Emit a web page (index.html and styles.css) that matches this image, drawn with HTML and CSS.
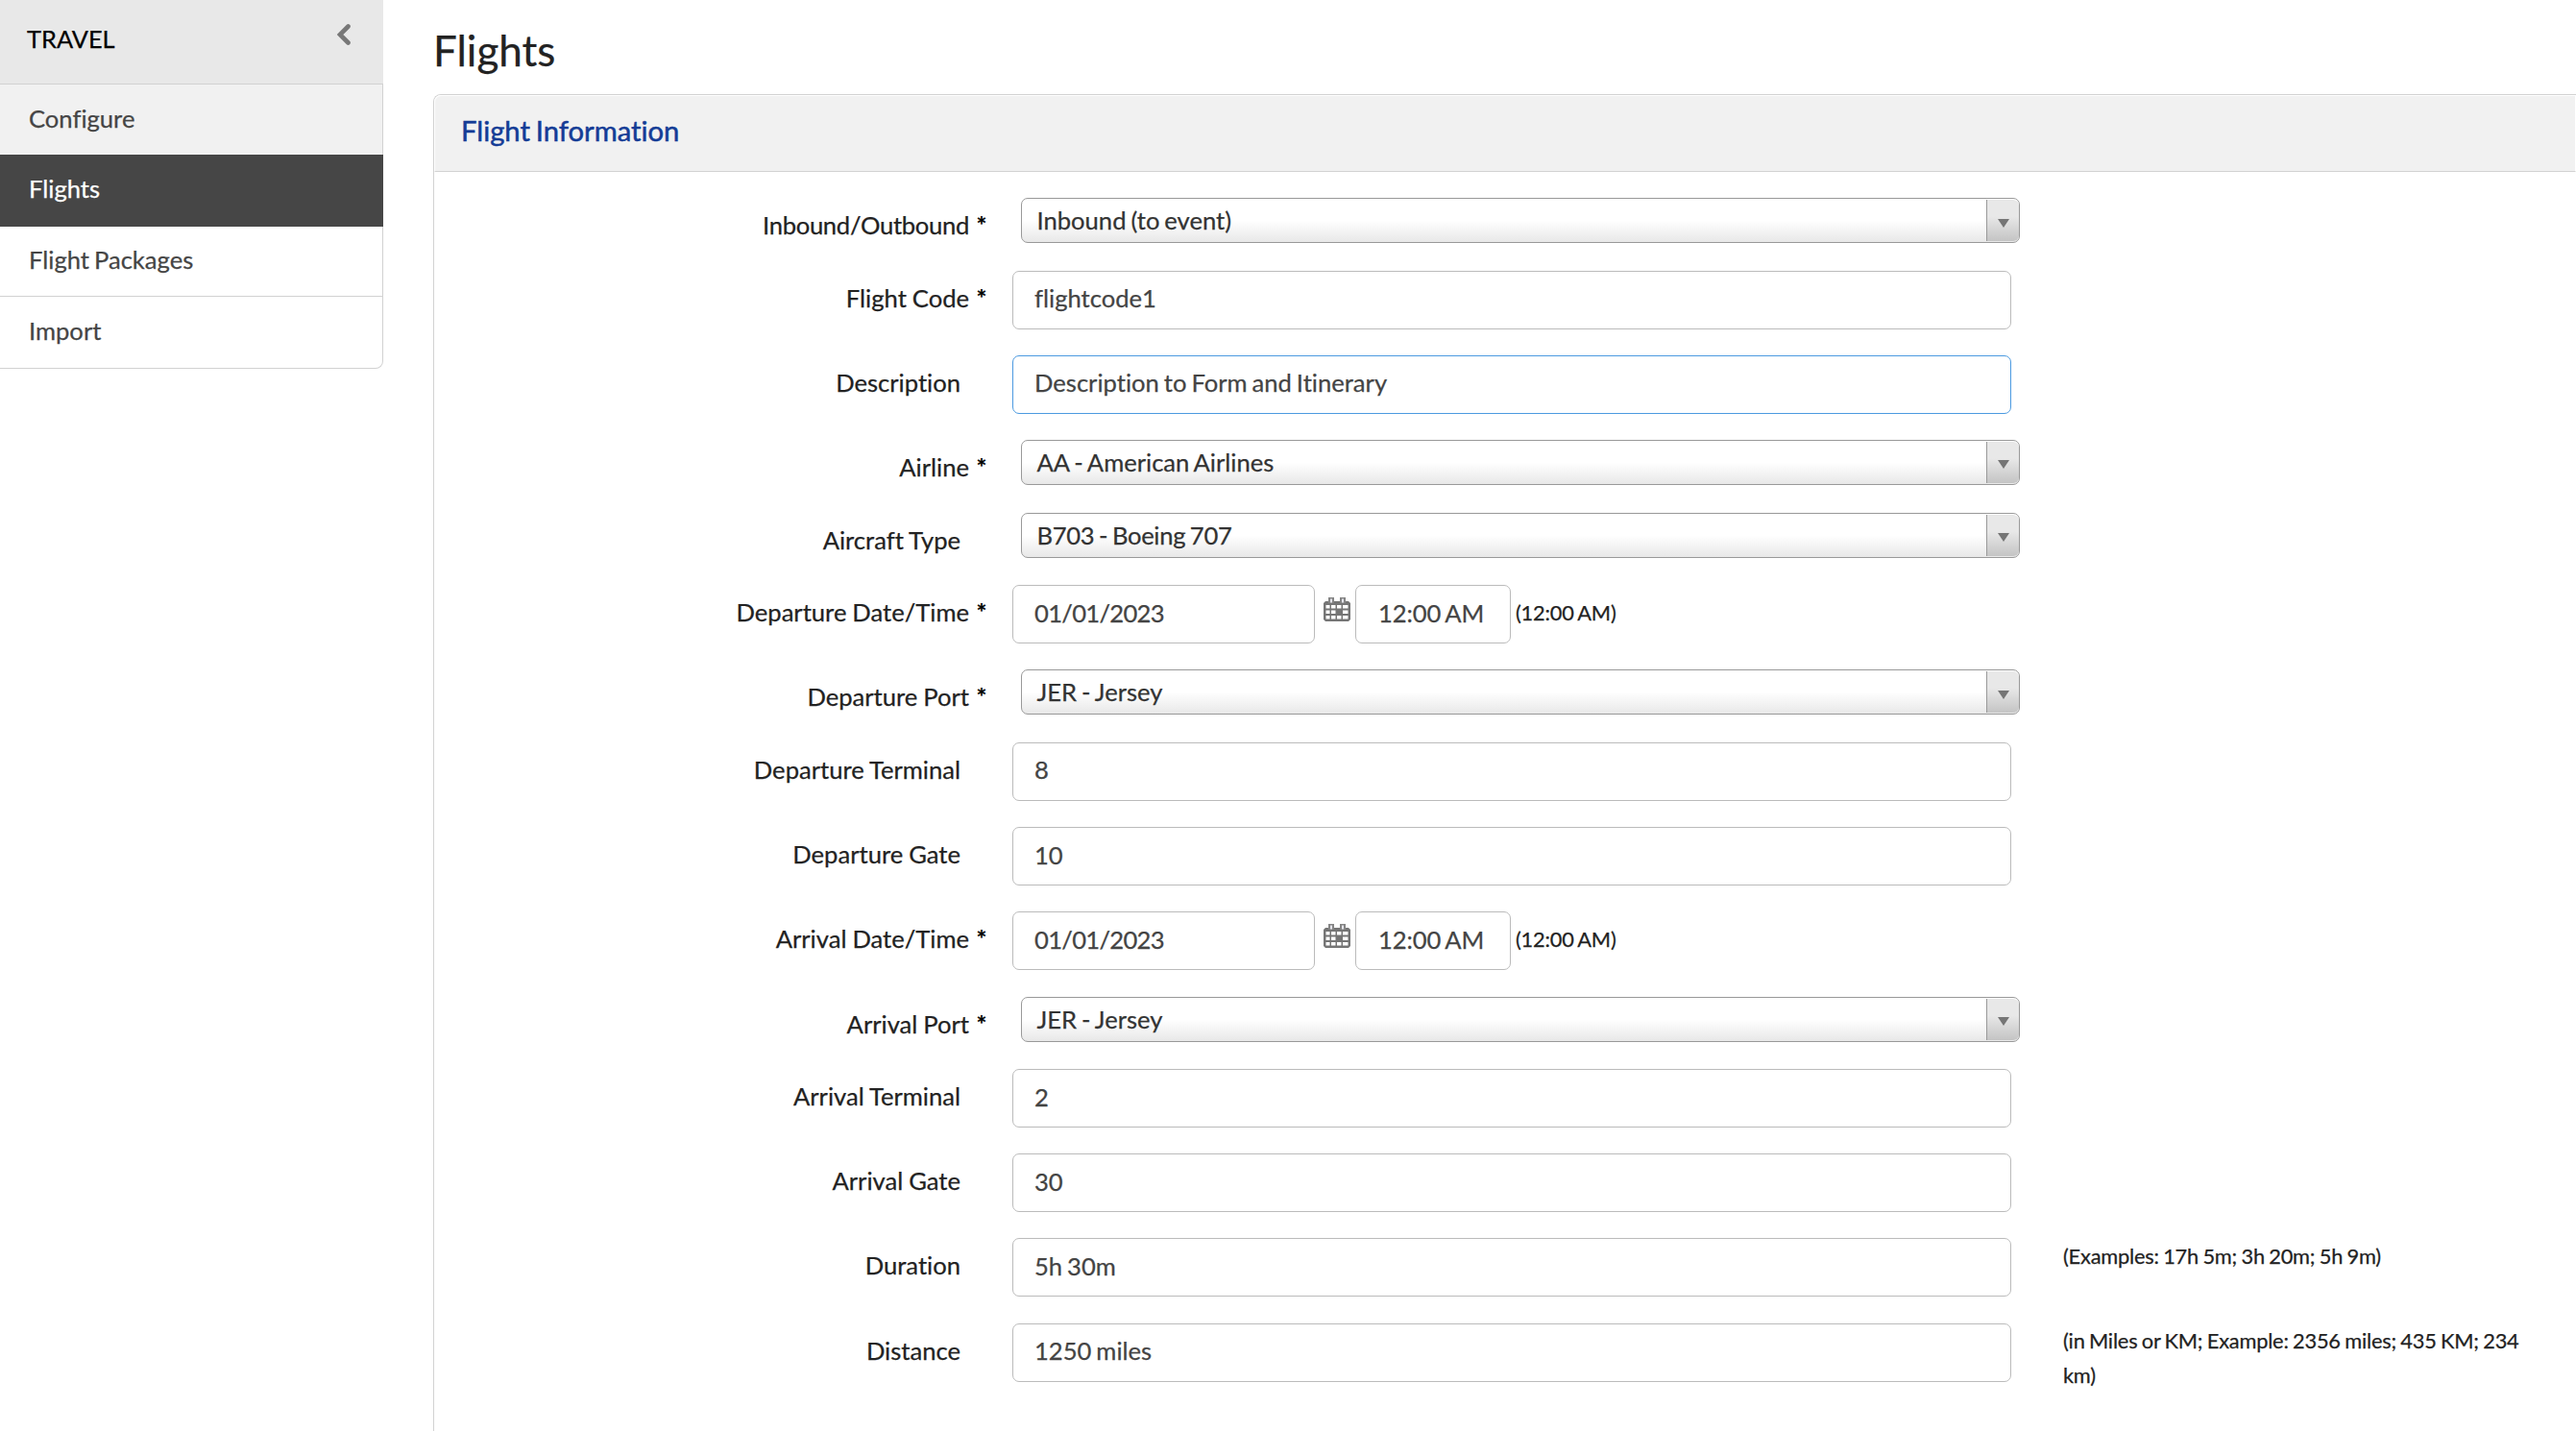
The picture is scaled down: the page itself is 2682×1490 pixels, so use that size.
FILE: index.html
```html
<!DOCTYPE html>
<html lang="en">
<head>
    <meta charset="UTF-8">
    <meta name="viewport" content="width=device-width, initial-scale=1.0">
    <title>Flights</title>
    <link rel="stylesheet" href="styles.css">
</head>
<body>
    <svg class="defs" width="0" height="0">
        <symbol id="calendar" viewBox="0 0 28 25">
            <path d="M2 4h24l2 2v17l-2 2H2l-2-2V6z" fill="#757575"/>
            <path d="M5 0h6v6H5zM17 0h6v6h-6z" fill="#858585"/>
            <path d="M7 1.500h2v4H7zM19 1.500h2v4h-2z" fill="#e4e4ea"/>
            <path d="M2.500 8h4v3.500h-4zM8 8h4.500v3.500H8zM14 8h4.500v3.500H14zM20 8h5.500v3.500H20zM2.500 13.500h4V17h-4zM8 13.500h4.500V17H8zM20 13.500h5.500V17H20zM2.500 19h4v3.500h-4zM8 19h4.500v3.500H8zM14 19h4.500v3.500H14zM20 19h5.500v3.500H20z" fill="#fff"/>
        </symbol>
    </svg>

    <div class="page">
        <nav class="sidebar">
            <div class="sidebar-header">
                <span>TRAVEL</span>
                <svg class="collapse" viewBox="0 0 14 22"><path d="M11.500 2.500 3 11l8.500 8.500" fill="none" stroke="#777" stroke-width="4.600" stroke-linecap="round"/></svg>
            </div>
            <a class="nav-item shaded">Configure</a>
            <a class="nav-item active">Flights</a>
            <a class="nav-item">Flight Packages</a>
            <a class="nav-item last">Import</a>
        </nav>

        <main class="content">
            <h1>Flights</h1>
            <section class="panel">
                <h2>Flight Information</h2>
                <form class="form">
                    <div class="row short">
                        <label class="required"><span class="tight">Inbound/Outbound</span></label>
                        <div class="select"><span>Inbound (to event)</span><i class="arrow"></i></div>
                    </div>
                    <div class="row">
                        <label class="required" for="code">Flight Code</label>
                        <input type="text" id="code" value="flightcode1">
                    </div>
                    <div class="row">
                        <label for="description">Description</label>
                        <input type="text" id="description" class="focused" value="Description to Form and Itinerary">
                    </div>
                    <div class="row short">
                        <label class="required">Airline</label>
                        <div class="select"><span>AA - American Airlines</span><i class="arrow"></i></div>
                    </div>
                    <div class="row short">
                        <label>Aircraft Type</label>
                        <div class="select"><span class="tight">B703 - Boeing 707</span><i class="arrow"></i></div>
                    </div>
                    <div class="row">
                        <label class="required" for="depDate">Departure Date/Time</label>
                        <div class="datetime">
                            <input type="text" id="depDate" class="date" value="01/01/2023">
                            <svg class="calendar"><use href="#calendar"/></svg>
                            <input type="text" class="time" value="12:00 AM">
                            <span class="hint">(12:00 AM)</span>
                        </div>
                    </div>
                    <div class="row short">
                        <label class="required">Departure Port</label>
                        <div class="select"><span>JER - Jersey</span><i class="arrow"></i></div>
                    </div>
                    <div class="row">
                        <label for="depTerminal">Departure Terminal</label>
                        <input type="text" id="depTerminal" value="8">
                    </div>
                    <div class="row">
                        <label for="depGate">Departure Gate</label>
                        <input type="text" id="depGate" value="10">
                    </div>
                    <div class="row">
                        <label class="required" for="arrDate">Arrival Date/Time</label>
                        <div class="datetime">
                            <input type="text" id="arrDate" class="date" value="01/01/2023">
                            <svg class="calendar"><use href="#calendar"/></svg>
                            <input type="text" class="time" value="12:00 AM">
                            <span class="hint">(12:00 AM)</span>
                        </div>
                    </div>
                    <div class="row short">
                        <label class="required">Arrival Port</label>
                        <div class="select"><span>JER - Jersey</span><i class="arrow"></i></div>
                    </div>
                    <div class="row">
                        <label for="arrTerminal">Arrival Terminal</label>
                        <input type="text" id="arrTerminal" value="2">
                    </div>
                    <div class="row">
                        <label for="arrGate">Arrival Gate</label>
                        <input type="text" id="arrGate" value="30">
                    </div>
                    <div class="row">
                        <label for="duration">Duration</label>
                        <input type="text" id="duration" value="5h 30m">
                        <span class="hint">(Examples: 17h 5m; 3h 20m; 5h 9m)</span>
                    </div>
                    <div class="row">
                        <label for="distance">Distance</label>
                        <input type="text" id="distance" value="1250 miles">
                        <span class="hint">(in Miles or KM; Example: 2356 miles; 435 KM; 234 km)</span>
                    </div>
                </form>
            </section>
        </main>
    </div>
</body>
</html>
```

FILE: styles.css
```css
* {
    box-sizing: border-box;
}
body {
    margin: 0;
    height: 1490px;
    overflow: hidden;
    background: #fff;
    color: #222;
    font-family: Lato, sans-serif;
    font-size: 25.6px;
    font-variant-ligatures: none;
    word-spacing: -1.6px;
    -webkit-text-stroke: 0.25px;
}
.defs {
    display: block;
}
.page {
    display: flex;
    height: 1490px;
}

/* sidebar */
.sidebar {
    width: 399px;
    flex: none;
}
.sidebar-header {
    display: flex;
    justify-content: space-between;
    height: 87px;
    padding: 0 34px 0 28px;
    background: #e8e8e8;
    color: #000;
    font-size: 25.4px;
    line-height: 81px;
}
.collapse {
    width: 14px;
    height: 22px;
    margin-top: 25px;
}
.nav-item {
    display: block;
    height: 74px;
    padding-left: 30px;
    border-top: 1px solid #d2d2d2;
    border-right: 1px solid #d2d2d2;
    color: #454545;
    line-height: 71px;
}
.nav-item.shaded {
    background: #f1f1f1;
}
.nav-item.active {
    height: 75px;
    background: #464646;
    border-color: #464646;
    color: #fff;
    line-height: 69px;
}
.nav-item:nth-of-type(3) {
    height: 72px;
    border-top: none;
    line-height: 69px;
}
.nav-item.last {
    height: 76px;
    border-bottom: 1px solid #d2d2d2;
    border-bottom-right-radius: 8px;
}

/* main panel */
.content {
    flex: 1;
    padding-left: 52px;
}
h1 {
    height: 98px;
    margin: 0;
    font-size: 44px;
    font-weight: normal;
    line-height: 104px;
}
.panel {
    height: 1400px;
    border: 1px solid #d2d2d2;
    border-right: none;
    border-top-left-radius: 8px;
}
h2 {
    height: 80px;
    margin: 0;
    padding-left: 27px;
    background: #f1f1f1;
    border: 1px solid #fff;
    border-bottom: 1px solid #d2d2d2;
    border-top-left-radius: 7px;
    color: #143c96;
    font-size: 29.2px;
    font-weight: normal;
    line-height: 72px;
    -webkit-text-stroke: 0.5px;
}
.form {
    padding-top: 27px;
}
.row {
    display: grid;
    grid-template-columns: 548px 1040px 500px;
    column-gap: 54px;
    height: 88.2px;
    align-items: start;
}
.row.short {
    height: 75.6px;
}
label {
    line-height: 57.4px;
    text-align: right;
    word-spacing: -0.6px;
}
label.required {
    margin-right: -28px;
}
label.required::after {
    content: "*";
    display: inline-block;
    width: 12px;
    margin-left: 7px;
    color: #000;
    font-weight: bold;
    text-align: center;
}
.tight {
    letter-spacing: -0.3px;
}
input {
    width: 100%;
    height: 61px;
    padding: 0 23px 4px 22px;
    border: 1px solid #bbb;
    border-radius: 7px;
    background: #fff;
    color: #444;
    font: inherit;
    word-spacing: inherit;
    outline: none;
}
input.focused {
    border-color: #4c9ae0;
}
.select {
    display: flex;
    justify-content: space-between;
    height: 47px;
    margin: 0 -9px 0 9px;
    padding-left: 15.5px;
    border: 1px solid #999;
    border-radius: 7px;
    background: linear-gradient(#fff 50%, #e8e8e8);
    color: #333;
    line-height: 45px;
}
.arrow {
    display: flex;
    align-items: center;
    justify-content: center;
    width: 34px;
    margin: 1px 0;
    border-left: 1px solid #999;
    border-radius: 0 6px 6px 0;
    background: linear-gradient(#e8e8e8 40%, #c4c4c4);
}
.arrow::before {
    content: "";
    margin-top: 5px;
    border: 6px solid transparent;
    border-top: 9px solid #757575;
    border-bottom: none;
}
.datetime {
    display: flex;
}
.date {
    width: 315px;
    letter-spacing: -0.7px;
}
.calendar {
    width: 28px;
    height: 25px;
    margin: 13px 5px 0 9px;
}
.time {
    width: 162px;
    padding-left: 23px;
    letter-spacing: -0.1px;
}
.hint {
    font-size: 21.8px;
    line-height: 36px;
    letter-spacing: -0.2px;
    word-spacing: -1px;
}
.row > .hint {
    margin-top: 0.6px;
}
.datetime .hint {
    margin: 11px 0 0 5px;
}
```
